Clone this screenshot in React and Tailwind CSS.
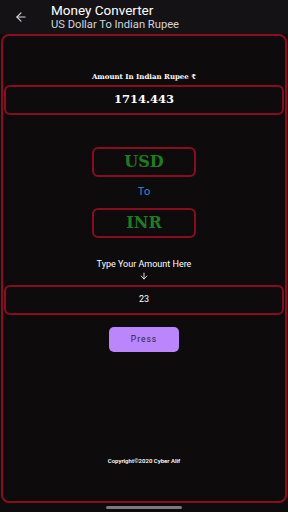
import { ArrowLeft, ArrowDown } from "lucide-react";

const serif = { fontFamily: '"DejaVu Serif", "Liberation Serif", serif' };

const App = () => {
  return (
    <div
      className="w-[288px] h-[512px] bg-[#0e0b0c] flex flex-col overflow-hidden"
      style={{ fontFamily: 'Roboto, "Noto Sans", sans-serif' }}
    >
      <div className="h-[34px] bg-[#151215] flex items-center shrink-0">
        <div className="w-[51px] flex justify-center pr-[10px]">
          <ArrowLeft size={14} className="text-gray-300" strokeWidth={2} />
        </div>
        <div className="flex flex-col leading-none">
          <span className="text-white text-[13.5px]">Money Converter</span>
          <span className="text-gray-300 text-[11.2px] mt-[1px]">US Dollar To Indian Rupee</span>
        </div>
      </div>

      <div className="mx-[1px] h-[469px] border-2 border-[#8a0c20] rounded-[8px] flex flex-col items-center">
        <p className="mt-[36px] text-white text-[7px] font-bold leading-[10px]" style={serif}>
          Amount In Indian Rupee ₹
        </p>
        <div className="mt-[3px] w-[280px] h-[30px] border-2 border-[#8a0c20] rounded-[6px] flex items-center justify-center">
          <span className="text-white text-[11.5px] font-bold" style={serif}>1714.443</span>
        </div>

        <div className="mt-[32px] w-[104px] h-[30px] border-2 border-[#8a0c20] rounded-[6px] flex items-center justify-center">
          <span className="text-[#1e7e1e] text-[16px] font-bold" style={serif}>USD</span>
        </div>
        <p className="mt-[8px] text-[#2b8fd0] text-[11px] leading-[14px]">To</p>
        <div className="mt-[9px] w-[104px] h-[30px] border-2 border-[#8a0c20] rounded-[6px] flex items-center justify-center">
          <span className="text-[#1e7e1e] text-[16px] font-bold" style={serif}>INR</span>
        </div>

        <p className="mt-[20px] text-white text-[9px] leading-[12px]">Type Your Amount Here</p>
        <ArrowDown size={10} className="text-white mt-[1px]" strokeWidth={2} />
        <div className="mt-[4px] w-[280px] h-[30px] border-2 border-[#8a0c20] rounded-[6px] flex items-center justify-center">
          <span className="text-white text-[9px]">23</span>
        </div>

        <button className="mt-[12px] w-[70px] h-[25px] bg-[#bb86fc] rounded-[5px] text-[#2e1f40] text-[8.5px] tracking-[1px]">
          Press
        </button>

        <p className="mt-[104px] text-white text-[6px] font-semibold">Copyright©2020 Cyber Alif</p>
      </div>

      <div className="flex-1 flex items-center justify-center">
        <div className="w-[76px] h-[3px] rounded-full bg-[#7a7a7a]" />
      </div>
    </div>
  );
};

export default App;
